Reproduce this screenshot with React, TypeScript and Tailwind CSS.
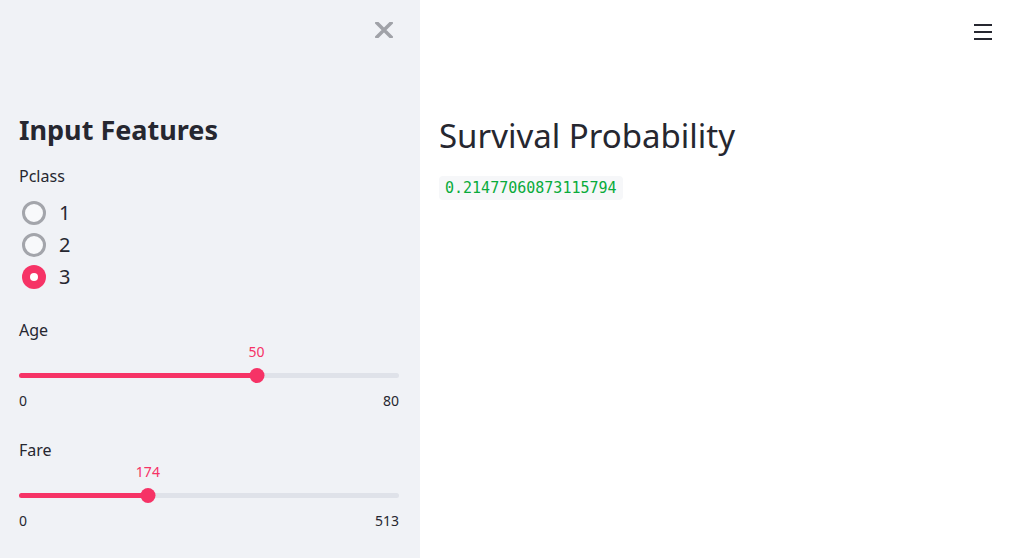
const PINK = "#f63366";

type SliderProps = { label: string; value: number; min: number; max: number };

const Slider = ({ label, value, min, max }: SliderProps) => {
  const pct = ((value - min) / (max - min)) * 100;
  return (
    <div>
      <p className="text-[16px] leading-[20px] text-[#262730]">{label}</p>
      <div className="relative mt-[2px] h-[20px]">
        <span
          className="absolute -translate-x-1/2 text-[14px] leading-[20px] text-[#f63366]"
          style={{ left: `${pct}%` }}
        >
          {value}
        </span>
      </div>
      <div className="relative mt-[5px] h-[16px]">
        <div className="absolute left-0 right-0 top-[6px] h-[5px] rounded-full bg-[#dfe2e9]" />
        <div
          className="absolute left-0 top-[6px] h-[5px] rounded-full bg-[#f63366]"
          style={{ width: `${pct}%` }}
        />
        <div
          className="absolute top-[1px] h-[15px] w-[15px] -translate-x-1/2 rounded-full bg-[#f63366]"
          style={{ left: `${pct}%` }}
        />
      </div>
      <div className="mt-[8px] flex justify-between text-[14px] leading-[20px] text-[#262730]">
        <span>{min}</span>
        <span>{max}</span>
      </div>
    </div>
  );
};

const Radio = ({ label, checked }: { label: string; checked?: boolean }) => (
  <div className="flex h-[32px] items-center">
    <div className="flex w-[32px] items-center">
      {checked ? (
        <span className="flex h-[24px] w-[24px] items-center justify-center rounded-full bg-[#f63366]">
          <span className="h-[8px] w-[8px] rounded-full bg-white" />
        </span>
      ) : (
        <span className="h-[24px] w-[24px] rounded-full border-[3px] border-[#a3a5ab] bg-[#f8f9fb]" />
      )}
    </div>
    <span className="pl-[5px] text-[20px] leading-[28px] text-[#262730]">{label}</span>
  </div>
);

export default function App() {
  return (
    <div
      className="flex h-[558px] w-[1024px] overflow-hidden bg-white"
      style={{ fontFamily: '"Noto Sans", "Noto Sans CJK JP", sans-serif' }}
    >
      <aside className="h-full w-[420px] shrink-0 bg-[#f0f2f6]">
        <div className="flex justify-end pr-[27px] pt-[22px]">
          <svg width="18" height="16" viewBox="0 0 18 16">
            <path d="M2 1 L16 15 M16 1 L2 15" stroke="#a0a2a8" strokeWidth="3.5" strokeLinecap="square" />
          </svg>
        </div>
        <div className="px-[19px] pr-[21px]">
          <h2 className="mt-[74px] text-[27px] font-bold leading-[36px] text-[#262730]">Input Features</h2>
          <p className="mt-[18px] text-[16px] leading-[20px] text-[#262730]">Pclass</p>
          <div className="mt-[11px] pl-[3px]">
            <Radio label="1" />
            <Radio label="2" />
            <Radio label="3" checked />
          </div>
          <div className="mt-[27px]">
            <Slider label="Age" value={50} min={0} max={80} />
          </div>
          <div className="mt-[29px]">
            <Slider label="Fare" value={174} min={0} max={513} />
          </div>
        </div>
      </aside>
      <main className="flex-1">
        <div className="flex justify-end pr-[32px] pt-[24px]">
          <div className="flex w-[18px] flex-col gap-[5px]">
            <span className="h-[2px] bg-[#262730]" />
            <span className="h-[2px] bg-[#262730]" />
            <span className="h-[2px] bg-[#262730]" />
          </div>
        </div>
        <div className="pl-[19px]">
          <h1 className="mt-[74px] text-[33px] leading-[44px] text-[#262730]">Survival Probability</h1>
          <code
            className="mt-[18px] block w-fit rounded-[4px] bg-[#f6f7f9] px-[6px] text-[15px] leading-[24px] text-[#09ab3b]"
            style={{ fontFamily: '"DejaVu Sans Mono", monospace' }}
          >
            0.21477060873115794
          </code>
        </div>
      </main>
    </div>
  );
}
